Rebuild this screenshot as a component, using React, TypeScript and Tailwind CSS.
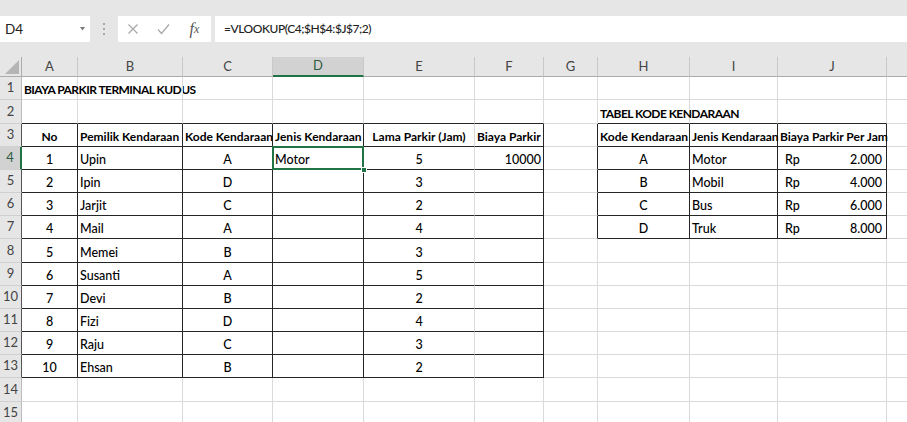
import { FC } from 'react';

type Align = 'left' | 'center' | 'right';

interface CellData {
  text?: string;
  align?: Align;
  bold?: boolean;
  caps?: boolean; // judul huruf kapital, dirapatkan
  rp?: string; // format akuntansi: "Rp" di kiri, nominal di kanan
}

const COLUMN_LETTERS = ['A', 'B', 'C', 'D', 'E', 'F', 'G', 'H', 'I', 'J', 'K'];
const ROW_COUNT = 15;

const GRID = '#dadada';
const DARK = '#262626';
const GREEN = '#217346';

// Daftar parkir
const parkir: [string, string, string, string][] = [
  ['1', 'Upin', 'A', '5'],
  ['2', 'Ipin', 'D', '3'],
  ['3', 'Jarjit', 'C', '2'],
  ['4', 'Mail', 'A', '4'],
  ['5', 'Memei', 'B', '3'],
  ['6', 'Susanti', 'A', '5'],
  ['7', 'Devi', 'B', '2'],
  ['8', 'Fizi', 'D', '4'],
  ['9', 'Raju', 'C', '3'],
  ['10', 'Ehsan', 'B', '2'],
];

// Tabel kode kendaraan
const kode: [string, string, string][] = [
  ['A', 'Motor', '2.000'],
  ['B', 'Mobil', '4.000'],
  ['C', 'Bus', '6.000'],
  ['D', 'Truk', '8.000'],
];

const buildSheet = () => {
  const sheet: Record<string, CellData> = {};
  const put = (r: number, c: number, d: CellData) => {
    sheet[`${r}:${c}`] = d;
  };

  put(1, 1, { text: 'BIAYA PARKIR TERMINAL KUDUS', bold: true, caps: true });
  put(2, 8, { text: 'TABEL KODE KENDARAAN', bold: true, caps: true });

  const head = ['No', 'Pemilik Kendaraan', 'Kode Kendaraan', 'Jenis Kendaraan', 'Lama Parkir (Jam)', 'Biaya Parkir'];
  const headAlign: Align[] = ['center', 'left', 'left', 'left', 'center', 'left'];
  head.forEach((h, i) => put(3, i + 1, { text: h, bold: true, align: headAlign[i] }));

  parkir.forEach(([no, nama, kd, lama], i) => {
    const r = 4 + i;
    put(r, 1, { text: no, align: 'center' });
    put(r, 2, { text: nama });
    put(r, 3, { text: kd, align: 'center' });
    put(r, 5, { text: lama, align: 'center' });
  });
  put(4, 4, { text: 'Motor' });
  put(4, 6, { text: '10000', align: 'right' });

  put(3, 8, { text: 'Kode Kendaraan', bold: true });
  put(3, 9, { text: 'Jenis Kendaraan', bold: true });
  put(3, 10, { text: 'Biaya Parkir Per Jam', bold: true });
  kode.forEach(([kd, jenis, biaya], i) => {
    const r = 4 + i;
    put(r, 8, { text: kd, align: 'center' });
    put(r, 9, { text: jenis });
    put(r, 10, { rp: biaya });
  });

  return sheet;
};

const sheet = buildSheet();

const inMain = (r: number, c: number) => r >= 3 && r <= 13 && c >= 1 && c <= 6;
const inLookup = (r: number, c: number) => r >= 3 && r <= 7 && c >= 8 && c <= 10;

const rightDark = (r: number, c: number) =>
  (inMain(r, c) && c !== 5) ||
  (c === 7 && r >= 3 && r <= 7) ||
  inLookup(r, c);

const bottomDark = (r: number, c: number) =>
  inMain(r, c) || (r === 2 && c >= 1 && c <= 6) || inLookup(r, c) || (r === 2 && c >= 8 && c <= 10);

const alignClass: Record<Align, string> = {
  left: 'justify-start pl-[2px]',
  center: 'justify-center',
  right: 'justify-end pr-[2px]',
};

const textStyle = (d?: CellData) => {
  if (d?.caps) return 'text-[12px] font-bold tracking-[-0.55px]';
  if (d?.bold) return 'text-[12px] font-bold';
  return 'text-[12.5px] font-medium';
};

const SheetCell: FC<{ r: number; c: number }> = ({ r, c }) => {
  const data = sheet[`${r}:${c}`];
  const selected = r === 4 && c === 4;

  return (
    <div
      className={`relative flex items-end pb-[1px] border-r border-b whitespace-nowrap leading-[16px] text-black ${textStyle(data)} ${
        alignClass[data?.align ?? 'left']
      }`}
      style={{
        borderRightColor: rightDark(r, c) ? DARK : GRID,
        borderBottomColor: bottomDark(r, c) ? DARK : GRID,
      }}
    >
      {data?.rp ? (
        <div className="flex w-full justify-between pl-[5px] pr-[4px]">
          <span>Rp</span>
          <span>{data.rp}</span>
        </div>
      ) : (
        data?.text
      )}
      {selected && (
        <>
          <div className="absolute z-10 left-[-1px] top-[-1px] right-[-1px] bottom-[-1px] border-2 border-[#217346] pointer-events-none" />
          <div className="absolute z-20 right-[-4px] bottom-[-4px] w-[6px] h-[6px] bg-[#217346] border border-white" />
        </>
      )}
    </div>
  );
};

const ColumnHeader: FC<{ letter: string; index: number }> = ({ letter, index }) => {
  const active = index === 4;
  return (
    <div
      className={`flex items-center justify-center border-r border-[#c8c8c8] text-[13px] ${
        active
          ? 'bg-[#d2d2d2] text-[#2e5c43] border-b-2 border-b-[#217346]'
          : 'bg-[#e6e6e6] text-[#444] border-b border-b-[#ababab]'
      }`}
    >
      {/* kolom K hanya terlihat sebagian, hurufnya di luar layar */}
      {letter === 'K' ? null : letter}
    </div>
  );
};

const RowHeader: FC<{ n: number }> = ({ n }) => {
  const active = n === 4;
  return (
    <div
      className={`flex items-center justify-center border-b border-b-[#d0d0d0] text-[13px] ${
        active ? 'bg-[#d2d2d2] text-[#2e5c43]' : 'bg-[#e6e6e6] text-[#444]'
      }`}
      style={{
        borderRightWidth: active ? 2 : 1,
        borderRightColor: active ? GREEN : n >= 3 && n <= 13 ? '#555' : '#bcbcbc',
      }}
    >
      {n}
    </div>
  );
};

const FormulaBar: FC = () => (
  <div className="flex h-[26px] bg-[#e6e6e6]">
    <div className="relative flex w-[90px] items-center bg-white pl-[5px] text-[13.5px] text-[#222]">
      D4
      <svg className="absolute right-[5px] top-[11px]" width="5" height="4" viewBox="0 0 5 4">
        <path d="M0 0 H5 L2.5 3.5 Z" fill="#7a7a7a" />
      </svg>
    </div>
    <div className="flex w-[28px] flex-col items-center justify-center gap-[3px]">
      <span className="h-[2px] w-[2px] bg-[#a8a8a8]" />
      <span className="h-[2px] w-[2px] bg-[#a8a8a8]" />
      <span className="h-[2px] w-[2px] bg-[#a8a8a8]" />
    </div>
    <div className="flex w-[93px] items-center bg-white">
      <span className="flex w-[30px] justify-center">
        <svg width="12" height="12" viewBox="0 0 12 12">
          <path d="M1.5 1.5 L10.5 10.5 M10.5 1.5 L1.5 10.5" stroke="#a8a8a8" strokeWidth="1.2" fill="none" />
        </svg>
      </span>
      <span className="flex w-[30px] justify-center">
        <svg width="13" height="12" viewBox="0 0 13 12">
          <path d="M1 6.5 L4.5 10.5 L12 1.5" stroke="#a8a8a8" strokeWidth="1.2" fill="none" />
        </svg>
      </span>
      <span className="flex w-[33px] justify-center font-['Liberation_Serif',serif] italic text-[16px] text-[#555]">
        f<span className="text-[12px] pt-[3px]">x</span>
      </span>
    </div>
    <div className="w-[4px]" />
    <div className="flex flex-1 items-center bg-white pl-[9px] text-[12px] font-medium tracking-[-0.45px] text-[#222]">
      =VLOOKUP(C4;$H$4:$J$7;2)
    </div>
  </div>
);

const App: FC = () => {
  const rows = Array.from({ length: ROW_COUNT }, (_, i) => i + 1);

  return (
    <div className="h-[422px] w-[907px] overflow-hidden bg-white font-['Lato',sans-serif]">
      <div className="h-[16px] bg-[#e6e6e6]" />
      <FormulaBar />
      <div className="h-[15px] bg-[#e6e6e6]" />

      <div className="grid grid-cols-[22px_56px_105px_90px_91px_111px_69px_54px_92px_88px_109px_64px] grid-rows-[20px_23px_24px_23px_23px_23px_23px_23px_24px_23px_23px_23px_23px_23px_24px_23px] bg-white">
        {/* pojok kiri atas */}
        <div className="relative bg-[#e6e6e6] border-r border-b border-[#ababab]">
          <svg className="absolute right-[2px] bottom-[2px]" width="14" height="14" viewBox="0 0 14 14">
            <path d="M14 0 V14 H0 Z" fill="#b5b5b5" />
          </svg>
        </div>
        {COLUMN_LETTERS.map((l, i) => (
          <ColumnHeader key={l} letter={l} index={i + 1} />
        ))}

        {rows.map((r) => (
          <div key={r} className="contents">
            <RowHeader n={r} />
            {COLUMN_LETTERS.map((l, i) => (
              <SheetCell key={l} r={r} c={i + 1} />
            ))}
          </div>
        ))}
      </div>
    </div>
  );
};

export default App;
